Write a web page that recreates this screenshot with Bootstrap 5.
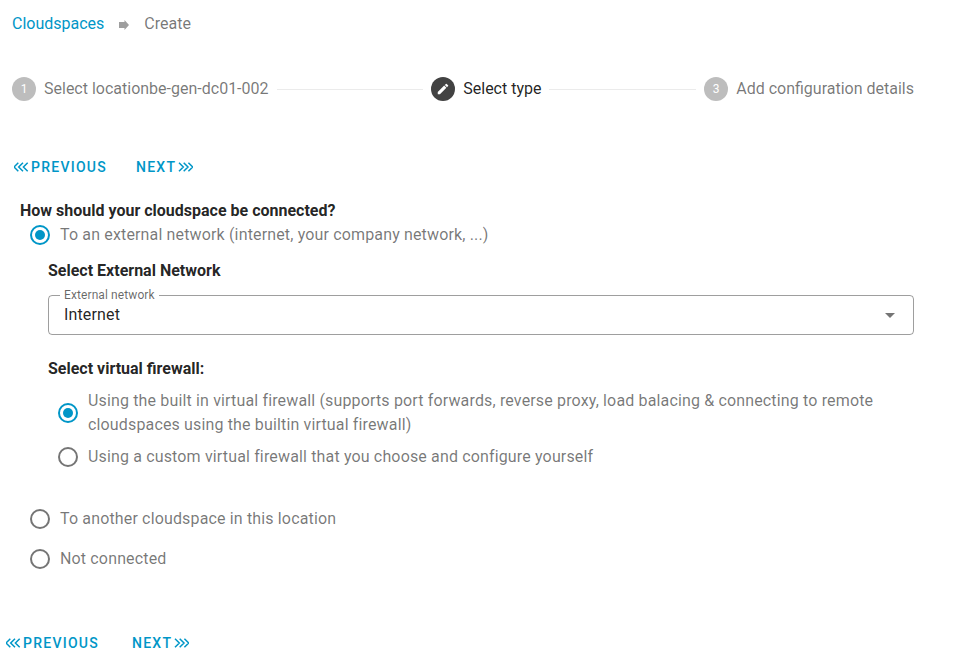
<!DOCTYPE html>
<html lang="en">
<head>
<meta charset="utf-8">
<title>Create cloudspace</title>
<link href="https://cdn.jsdelivr.net/npm/bootstrap@5.3.0/dist/css/bootstrap.min.css" rel="stylesheet">
<style>
html,body{height:664px;overflow:hidden}
body{font-family:Roboto,"Liberation Sans",sans-serif;font-size:16px;color:rgba(0,0,0,.87);background:#fff}
a{text-decoration:none}
.page-wrap{width:960px;height:664px;overflow:hidden}
.crumbs{height:24px;margin:12px 0 0 12px;line-height:24px;color:rgba(0,0,0,.54)}
.crumbs a{color:#0096c7}
.crumb-sep{margin:0 15px 0 15px;width:10px;height:24px;flex:none}
.stepper{margin:41px 46px 0 12px;height:24px;line-height:24px;color:rgba(0,0,0,.54)}
.step-dot{width:24px;height:24px;border-radius:50%;background:#bdbdbd;color:#fff;font-size:12px;text-align:center;line-height:24px;margin-right:8px;flex:none}
.step-dot-active{background:#424242}
.step-active{color:rgba(0,0,0,.87)}
.step-line{flex:1 1 0;height:1px;background:rgba(0,0,0,.08);margin:0 8px}
.nav-btns{height:36px;font-size:14px;font-weight:500;letter-spacing:1.25px;line-height:36px}
.nav-btns a{color:#0096c7;display:flex;align-items:center}
.nav-top{margin:48px 0 0 14px;gap:29px}
.nav-bottom{margin:54px 0 0 6px;gap:33px}
.nav-btns svg{width:15px;height:10px;flex:none}
.lbl-prev{margin-left:2px}
.lbl-next{margin-right:2px}
.main-form{margin:15px 0 0 20px;width:894px}
.q-title{font-weight:700;line-height:24px;height:24px;margin-top:-1px}
.sub-title{font-weight:700;line-height:24px;height:24px}
.opt{display:flex;color:rgba(0,0,0,.54);line-height:24px;letter-spacing:.15px}
.opt-radio{width:20px;height:20px;border:2px solid #757575;border-radius:50%;flex:none;margin:2px 10px 0 0;display:flex;align-items:center;justify-content:center}
.opt-radio.on{border-color:#0096c7}
.opt-radio.on::after{content:"";width:10px;height:10px;border-radius:50%;background:#0096c7}
.opt-mid{align-items:center}
.opt-mid .opt-radio{margin-top:0}
.lvl1{margin-left:10px}
.sel-block{margin:12px 0 0 28px}
.outline{height:46px;margin:6px 0 0;border:1px solid rgba(0,0,0,.38);border-radius:4px;padding:0 15px;position:relative;display:block;min-width:0}
.outline legend{float:none;width:auto;font-size:12px;line-height:12px;margin:0;padding:0 4px;margin-left:-4px;color:rgba(0,0,0,.6);letter-spacing:.1px}
.outline-val{line-height:24px;margin-top:2px;color:rgba(0,0,0,.87);letter-spacing:.15px}
.caret-dn{position:absolute;right:18px;top:12px;width:0;height:0;border-left:5px solid transparent;border-right:5px solid transparent;border-top:5px solid rgba(0,0,0,.54)}
.fw-block{margin:22px 0 0 0}
.fw-opts{margin:8px 0 0 10px;display:flex;flex-direction:column;gap:8px}
</style>
</head>
<body>
<div class="page-wrap">
  <div class="crumbs d-flex">
    <a href="#">Cloudspaces</a>
    <svg class="crumb-sep" viewBox="0 0 10 24"><path d="M0 10h5.500V8l4.500 5-4.500 5v-2H0z" fill="#9e9e9e"/></svg>
    <span>Create</span>
  </div>

  <div class="stepper d-flex align-items-center">
    <div class="step-dot">1</div><div>Select locationbe-gen-dc01-002</div>
    <div class="step-line"></div>
    <div class="step-dot step-dot-active d-flex align-items-center justify-content-center">
      <svg width="14" height="14" viewBox="0 0 24 24"><path fill="#fff" d="M3 17.25V21h3.75L17.81 9.94l-3.75-3.75L3 17.25zM20.71 7.04a1 1 0 0 0 0-1.41l-2.34-2.34a1 1 0 0 0-1.41 0l-1.83 1.83 3.75 3.75 1.83-1.83z"/></svg>
    </div><div class="step-active">Select type</div>
    <div class="step-line"></div>
    <div class="step-dot">3</div><div>Add configuration details</div>
  </div>

  <div class="nav-btns nav-top d-flex">
    <a href="#"><svg viewBox="0 0 15 10" fill="none" stroke="#0096c7" stroke-width="1.5"><path d="M4.300.7 0 5l4.300 4.300M9 .7 4.700 5 9 9.300M13.700.7 9.400 5l4.300 4.300"/></svg><span class="lbl-prev">PREVIOUS</span></a>
    <a href="#"><span class="lbl-next">NEXT</span><svg viewBox="0 0 15 10" fill="none" stroke="#0096c7" stroke-width="1.5"><path d="M1 .7 5.300 5 1 9.300M5.700.7 10 5 5.700 9.300M10.400.7 14.700 5l-4.300 4.300"/></svg></a>
  </div>

  <div class="main-form">
    <div class="q-title">How should your cloudspace be connected?</div>
    <div class="opt lvl1"><span class="opt-radio on"></span><span>To an external network (internet, your company network, ...)</span></div>

    <div class="sel-block">
      <div class="sub-title">Select External Network</div>
      <fieldset class="outline">
        <legend>External network</legend>
        <div class="outline-val">Internet</div>
        <span class="caret-dn"></span>
      </fieldset>
      <div class="fw-block">
        <div class="sub-title">Select virtual firewall:</div>
        <div class="fw-opts">
          <div class="opt opt-mid"><span class="opt-radio on"></span><span>Using the built in virtual firewall (supports port forwards, reverse proxy, load balacing &amp; connecting to remote cloudspaces using the builtin virtual firewall)</span></div>
          <div class="opt opt-mid"><span class="opt-radio"></span><span>Using a custom virtual firewall that you choose and configure yourself</span></div>
        </div>
      </div>
    </div>

    <div class="opt lvl1 opt-mid" style="margin-top:38px"><span class="opt-radio"></span><span>To another cloudspace in this location</span></div>
    <div class="opt lvl1 opt-mid" style="margin-top:16px"><span class="opt-radio"></span><span>Not connected</span></div>
  </div>

  <div class="nav-btns nav-bottom d-flex">
    <a href="#"><svg viewBox="0 0 15 10" fill="none" stroke="#0096c7" stroke-width="1.5"><path d="M4.300.7 0 5l4.300 4.300M9 .7 4.700 5 9 9.300M13.700.7 9.400 5l4.300 4.300"/></svg><span class="lbl-prev">PREVIOUS</span></a>
    <a href="#"><span class="lbl-next">NEXT</span><svg viewBox="0 0 15 10" fill="none" stroke="#0096c7" stroke-width="1.5"><path d="M1 .7 5.300 5 1 9.300M5.700.7 10 5 5.700 9.300M10.400.7 14.700 5l-4.300 4.300"/></svg></a>
  </div>
</div>
<script src="https://cdn.jsdelivr.net/npm/bootstrap@5.3.0/dist/js/bootstrap.bundle.min.js"></script>
</body>
</html>
